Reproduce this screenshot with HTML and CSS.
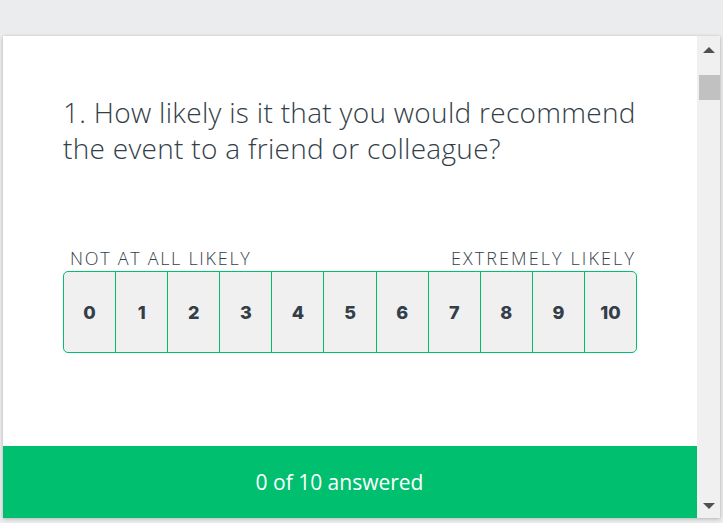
FILE: index.html
```html
<!DOCTYPE html>
<html lang="en">
<head>
    <meta charset="UTF-8">
    <meta name="viewport" content="width=device-width, initial-scale=1.0">
    <title>Survey</title>
    <link rel="stylesheet" href="styles.css">
</head>
<body>
    <div class="frame">
        <div class="survey">
            <main class="question">
                <h1 class="question-title">1. How likely is it that you would recommend the event to a friend or colleague?</h1>
                <div class="scale-labels">
                    <span>NOT AT ALL LIKELY</span>
                    <span>EXTREMELY LIKELY</span>
                </div>
                <div class="scale">
                    <button class="scale-item">0</button>
                    <button class="scale-item">1</button>
                    <button class="scale-item">2</button>
                    <button class="scale-item">3</button>
                    <button class="scale-item">4</button>
                    <button class="scale-item">5</button>
                    <button class="scale-item">6</button>
                    <button class="scale-item">7</button>
                    <button class="scale-item">8</button>
                    <button class="scale-item">9</button>
                    <button class="scale-item">10</button>
                </div>
            </main>
            <footer class="progress">0 of 10 answered</footer>
        </div>
        <div class="scrollbar">
            <span class="arrow up"></span>
            <span class="thumb"></span>
            <span class="track"></span>
            <span class="arrow down"></span>
        </div>
    </div>
</body>
</html>
```

FILE: styles.css
```css
html, body {
    height: 100%;
}
body {
    margin: 0;
    padding: 36px 3px 0 3px;
    box-sizing: border-box;
    background: #ebeced;
    font-family: "Open Sans", sans-serif;
    color: #333e48;
}
.frame {
    display: flex;
    height: 482px;
    background: #fff;
    box-shadow: 0 2px 4px rgba(0, 0, 0, 0.12), -1px 0 3px rgba(0, 0, 0, 0.08), 1px 0 3px rgba(0, 0, 0, 0.08);
}
.survey {
    flex: 1;
    display: flex;
    flex-direction: column;
}
.question {
    flex: 1;
    padding: 58px 60px 0 60px;
}
.question-title {
    margin: 0;
    font-size: 28px;
    font-weight: 300;
    line-height: 36px;
    letter-spacing: 0.3px;
    color: #333e48;
}
.scale-labels {
    display: flex;
    justify-content: space-between;
    margin-top: 80px;
    padding: 0 1px 0 7px;
    font-size: 18px;
    font-weight: 300;
    line-height: 25px;
    letter-spacing: 1.7px;
    color: #333e48;
}
.scale-labels span:last-child {
    letter-spacing: 2.1px;
}
.scale {
    display: flex;
    margin-top: 0;
    height: 82px;
}
.scale-item {
    flex: 1;
    margin: 0;
    margin-left: -1px;
    padding: 0;
    border: 1px solid #00bf6f;
    background: #f0f0f0;
    font-family: "Inter", sans-serif;
    font-size: 18px;
    font-weight: 800;
    color: #333e48;
}
.scale-item:first-child {
    margin-left: 0;
    border-radius: 5px 0 0 5px;
}
.scale-item:last-child {
    border-radius: 0 5px 5px 0;
}
.progress {
    height: 72px;
    display: flex;
    align-items: center;
    justify-content: center;
    padding-right: 21px;
    background: #00bf6f;
    color: #fff;
    font-size: 21px;
    font-weight: 400;
}
.scrollbar {
    width: 23px;
    display: flex;
    flex-direction: column;
    align-items: flex-end;
    background: #f0f0f0;
}
.arrow {
    width: 0;
    height: 0;
    margin: 0 5px 0 6px;
    border-left: 6px solid transparent;
    border-right: 6px solid transparent;
}
.arrow.up {
    margin-top: 11px;
    border-bottom: 6px solid #505050;
}
.arrow.down {
    margin-bottom: 9px;
    border-top: 6px solid #505050;
}
.thumb {
    width: 21px;
    height: 25px;
    margin-top: 22px;
    background: #c1c1c1;
}
.track {
    flex: 1;
}
```
